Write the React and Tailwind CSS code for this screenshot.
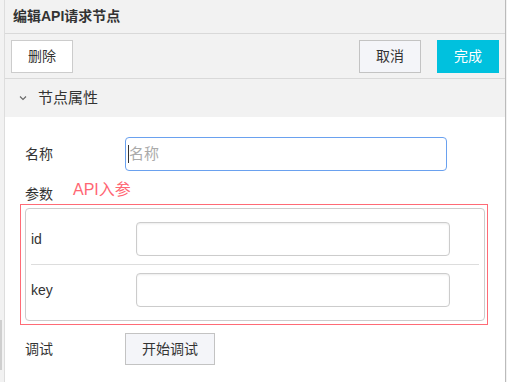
import React from "react";

const font = { fontFamily: '"Liberation Sans", "Noto Sans CJK SC", sans-serif' };

const TextInput = ({ placeholder, focused, width }) => (
  <div
    className={`h-[34px] ${width} rounded-[4px] border bg-white flex items-center px-[2px] ${
      focused ? "border-[#6aa1ef]" : "border-[#cccccc] shadow-[inset_0_1px_2px_rgba(0,0,0,0.08)]"
    }`}
  >
    {focused && <span className="w-px h-[18px] bg-[#333]" />}
    {placeholder && <span className="text-[15px] text-[#aaaaaa]">{placeholder}</span>}
  </div>
);

const App = () => {
  return (
    <div className="w-[507px] h-[382px] flex bg-[#f2f2f2] text-[#333] overflow-hidden" style={font}>
      {/* left gutter */}
      <div className="w-[4px] flex flex-col">
        <div className="mt-[320px] w-[2px] h-[50px] bg-[#cfcfcf]" />
      </div>

      <div className="w-[502px] h-full border-l border-r border-l-[#dddddd] border-r-[#bbbbbb] flex flex-col">
        <div className="h-[34px] border-b border-[#d9d9d9] flex items-center pl-[8px] text-[14px] font-bold text-[#333]">
          编辑API请求节点
        </div>

        <div className="h-[45px] border-b border-[#d9d9d9] flex items-start pt-[6px] px-[6px]">
          <button className="w-[62px] h-[33px] bg-white border border-[#cccccc] text-[14px] text-[#333]">
            删除
          </button>
          <div className="flex-1" />
          <button className="w-[62px] h-[33px] bg-[#f4f5f9] border border-[#c3c3c3] text-[14px] text-[#333]">
            取消
          </button>
          <button className="ml-[16px] w-[62px] h-[33px] bg-[#00c1de] text-[14px] text-white">
            完成
          </button>
        </div>

        <div className="h-[38px] flex items-center pl-[14px] text-[15px] text-[#333]">
          <svg width="8" height="6" viewBox="0 0 8 6" className="mr-[11px]">
            <path d="M1 1.5 L4 4.5 L7 1.5" fill="none" stroke="#666" strokeWidth="1.1" />
          </svg>
          节点属性
        </div>

        <div className="flex-1 bg-white px-[20px] pt-[20px] text-[14px]">
          <div className="flex items-center">
            <div className="w-[100px]">名称</div>
            <TextInput placeholder="名称" focused width="w-[322px]" />
          </div>

          <div className="flex items-start h-[33px]">
            <div className="pt-[13px]">参数</div>
            <div className="ml-[20px] pt-[7px] text-[16px] text-[#ff6673]">API入参</div>
          </div>

          <div className="-ml-[5px] w-[468px] border border-[#ff6b76] pt-[3px] pb-[3px] pl-[4px] pr-[2px]">
            <div className="border border-[#cccccc] rounded-[4px] px-[5px] py-[13px]">
              <div className="flex items-center">
                <div className="w-[105px]">id</div>
                <TextInput width="w-[314px]" />
              </div>
              <div className="h-px bg-[#dddddd] my-[8px]" />
              <div className="flex items-center">
                <div className="w-[105px]">key</div>
                <TextInput width="w-[314px]" />
              </div>
            </div>
          </div>

          <div className="flex items-center mt-[8px]">
            <div className="w-[100px]">调试</div>
            <button className="w-[90px] h-[32px] bg-[#f4f5f9] border border-[#c3c3c3] text-[14px] text-[#333]">
              开始调试
            </button>
          </div>
        </div>
      </div>
    </div>
  );
};

export default App;
